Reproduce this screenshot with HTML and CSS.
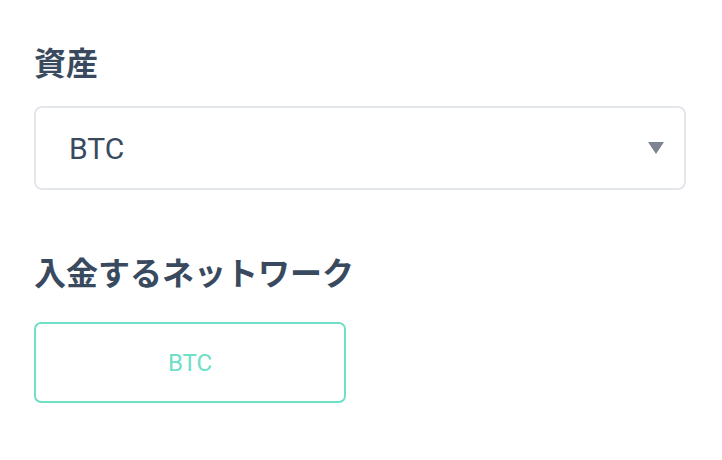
FILE: index.html
```html
<!DOCTYPE html>
<html lang="ja">
<head>
    <meta charset="UTF-8">
    <meta name="viewport" content="width=device-width, initial-scale=1.0">
    <title>入金</title>
    <link rel="stylesheet" href="styles.css">
</head>
<body>
<div class="deposit-form">
    <!-- Asset select -->
    <div class="field">
        <label class="field-label">資産</label>
        <div class="select-box">
            <span class="select-value">BTC</span>
            <span class="select-arrow"></span>
        </div>
    </div>

    <!-- Network options -->
    <div class="field">
        <label class="field-label">入金するネットワーク</label>
        <div class="network-list">
            <button class="network-button active">BTC</button>
        </div>
    </div>
</div>
</body>
</html>
```

FILE: styles.css
```css
/* General styles */
body {
    font-family: Roboto, "Noto Sans CJK JP", sans-serif;
    background-color: #ffffff;
    color: #394a5f;
    margin: 0;
    padding: 0;
}

.deposit-form {
    padding: 38px 36px 0 34px;
}

.field {
    margin-bottom: 58px;
}

.field-label {
    display: block;
    font-family: "Noto Sans CJK JP", sans-serif;
    font-size: 32px;
    font-weight: 700;
    line-height: 46px;
    margin-bottom: 22px;
}

.field + .field .field-label {
    margin-bottom: 28px;
}

/* Select box */
.select-box {
    display: flex;
    align-items: center;
    justify-content: space-between;
    height: 80px;
    padding: 0 20px 0 33px;
    border: 2px solid #e3e6ea;
    border-radius: 8px;
}

.select-value {
    font-size: 30px;
}

.select-arrow {
    width: 0;
    height: 0;
    border-left: 8px solid transparent;
    border-right: 8px solid transparent;
    border-top: 12px solid #7d8591;
}

/* Network buttons */
.network-list {
    display: flex;
    gap: 16px;
}

.network-button {
    width: 312px;
    height: 81px;
    font-family: Roboto, sans-serif;
    font-size: 24px;
    color: #6fe0c6;
    background-color: #ffffff;
    border: 2px solid #6fe0c6;
    border-radius: 7px;
    cursor: pointer;
}
```
